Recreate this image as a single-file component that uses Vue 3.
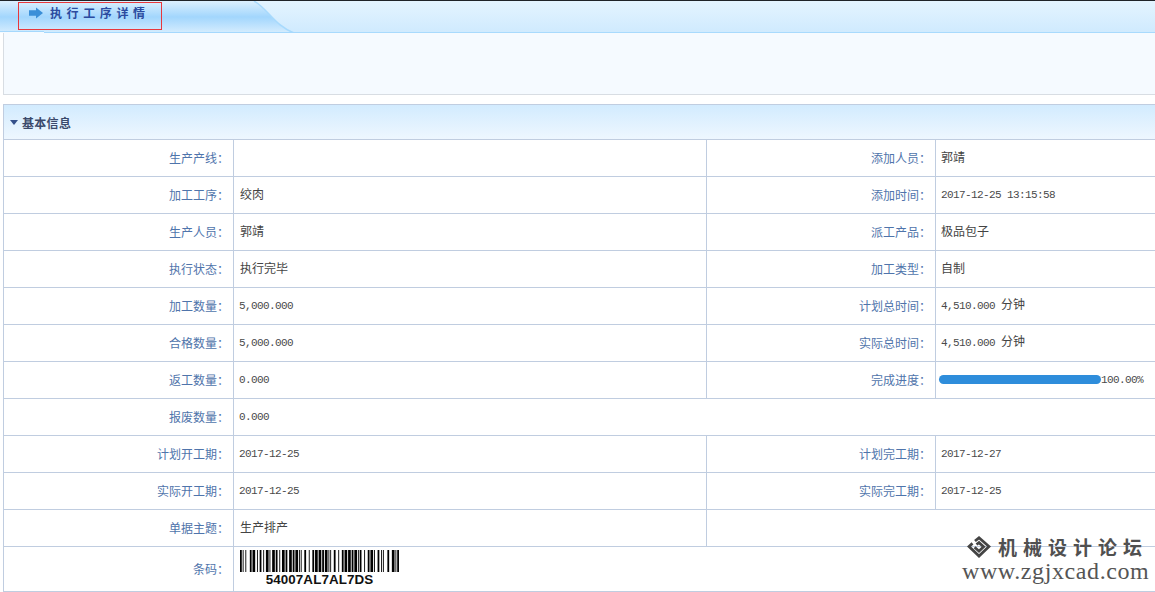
<script setup>
const rows = [
  [{ l: '生产产线：', v: '' }, { l: '添加人员：', v: '郭靖' }],
  [{ l: '加工工序：', v: '绞肉' }, { l: '添加时间：', n: '2017-12-25 13:15:58' }],
  [{ l: '生产人员：', v: '郭靖' }, { l: '派工产品：', v: '极品包子' }],
  [{ l: '执行状态：', v: '执行完毕' }, { l: '加工类型：', v: '自制' }],
  [{ l: '加工数量：', n: '5,000.000' }, { l: '计划总时间：', n: '4,510.000 ', v: '分钟' }],
  [{ l: '合格数量：', n: '5,000.000' }, { l: '实际总时间：', n: '4,510.000 ', v: '分钟' }],
  [{ l: '返工数量：', n: '0.000' }, { l: '完成进度：', progress: true }],
  [{ l: '报废数量：', n: '0.000', span: 3 }],
  [{ l: '计划开工期：', n: '2017-12-25' }, { l: '计划完工期：', n: '2017-12-27' }],
  [{ l: '实际开工期：', n: '2017-12-25' }, { l: '实际完工期：', n: '2017-12-25' }],
  [{ l: '单据主题：', v: '生产排产' }, { blank: true }]
]
const patterns = {
  start: '211214', 5: '213212', 4: '221231', 0: '123122', 7: '312131',
  A: '111323', L: '132131', D: '112313', S: '213113', check: '221114', stop: '2331112'
}
const seq = ['start', ...'54007AL7AL7DS', 'check', 'stop']
const bars = []
let x = 0
for (const key of seq) {
  const p = patterns[key]
  for (let i = 0; i < p.length; i++) {
    const w = Number(p[i])
    if (i % 2 === 0) bars.push({ x, w })
    x += w
  }
}
</script>

<template>
  <div class="page">
    <header class="topbar">
      <svg class="tab-shape" width="300" height="32" viewBox="0 0 300 32" aria-hidden="true">
        <defs>
          <linearGradient id="tabg" x1="0" y1="0" x2="0" y2="1">
            <stop offset="0" stop-color="#dcf0fe" />
            <stop offset="0.5" stop-color="#a2d6fd" />
            <stop offset="1" stop-color="#d6edfe" />
          </linearGradient>
        </defs>
        <path d="M0 0H254C268 8 274 24 294 32H0Z" fill="url(#tabg)" stroke="none" />
        <path d="M254 0C268 8 274 24 294 32" fill="none" stroke="#a8dafd" stroke-width="1.5" />
        <rect x="44" y="31" width="256" height="1" fill="#a5d8fd" />
        <rect x="0" y="30" width="44" height="1" fill="#a5d8fd" />
        <rect x="0" y="31" width="44" height="1" fill="#f5faff" />
      </svg>
      <div class="title-box">
        <svg class="arrow" width="14" height="12" viewBox="0 0 14 12" aria-hidden="true">
          <path d="M0 3.2H7V0.5L14 6L7 11.5V8.8H0Z" fill="#3a8fd8" />
        </svg>
        <span class="title">执行工序详情</span>
      </div>
    </header>

    <div class="toolbar"></div>

    <section class="info">
      <div class="section-head">
        <span class="tri"></span>
        <span class="section-title">基本信息</span>
      </div>
      <table class="grid">
        <colgroup>
          <col class="c1" /><col class="c2" /><col class="c3" /><col class="c4" />
        </colgroup>
        <tbody>
          <tr v-for="(row, i) in rows" :key="i">
            <template v-for="(c, j) in row" :key="j">
              <td v-if="c.blank" colspan="2"></td>
              <template v-else>
                <td class="label">{{ c.l }}</td>
                <td class="value" :class="{ 'value-first': j === 0, 'value-bar': c.progress }" :colspan="c.span || 1">
                  <div v-if="c.progress" class="progress">
                    <span class="bar"></span><span class="num">100.00%</span>
                  </div>
                  <template v-else>
                    <span v-if="c.n" class="num">{{ c.n }}</span>{{ c.v }}
                  </template>
                </td>
              </template>
            </template>
          </tr>
          <tr class="last">
            <td class="label">条码：</td>
            <td class="value barcode-cell" colspan="3">
              <div class="barcode">
                <svg width="159" height="22" viewBox="0 0 178 22" preserveAspectRatio="none" aria-hidden="true">
                  <rect v-for="(b, k) in bars" :key="k" :x="b.x" y="0" :width="b.w" height="22" fill="#000" />
                </svg>
                <span class="code-text">54007AL7AL7DS</span>
              </div>
            </td>
          </tr>
        </tbody>
      </table>
    </section>

    <div class="watermark">
      <div class="wm-top">
        <svg width="24" height="22" viewBox="0 0 24 22" aria-hidden="true">
          <g fill="none" stroke="#444" stroke-width="2.8">
            <path d="M8 5L12 1.8L22 10.5L12 20L2 10.5L5.5 7.4" />
            <path d="M9.5 8.5L12 6.6L16.6 10.8L12 15.2L7.6 11.2" />
          </g>
        </svg>
        <span class="wm-cn">机械设计论坛</span>
      </div>
      <div class="wm-url">www.zgjxcad.com</div>
    </div>
  </div>
</template>

<style>
html, body { margin: 0; padding: 0; background: #fff; }
</style>

<style scoped>
.page {
  position: relative;
  width: 1155px;
  height: 592px;
  overflow: hidden;
  background: #fff;
  font-family: "Noto Sans CJK SC", "Liberation Sans", sans-serif;
  font-size: 12px;
}
.topbar {
  position: relative;
  height: 32px;
  border-top: 1px solid #1f2328;
  background: linear-gradient(#e4f4ff, #cfeafe);
  box-shadow: inset 0 -1px 0 #a8dafd;
}
.tab-shape {
  position: absolute;
  left: 0;
  top: 0;
}
.title-box {
  position: absolute;
  left: 18px;
  top: 1px;
  width: 132px;
  height: 19px;
  padding: 0 0 7px 10px;
  border: 1px solid #e8383c;
  display: flex;
  align-items: center;
  gap: 7px;
}
.arrow { flex: none; }
.title {
  font-weight: 700;
  letter-spacing: 4.6px;
  color: #2b4ba0;
  line-height: 18px;
  white-space: nowrap;
}
.toolbar {
  height: 61px;
  margin-left: 3px;
  margin-right: -1px;
  background: #f5faff;
  border: 1px solid #d8dde3;
  border-top: 0;
}
.info {
  margin: 9px -1px 0 3px;
}
.section-head {
  height: 34px;
  display: flex;
  align-items: center;
  gap: 4px;
  padding-left: 6px;
  border: 1px solid #c0cde0;
  background: linear-gradient(#d2ebfe, #eef7ff);
}
.tri {
  width: 0;
  height: 0;
  border-left: 4px solid transparent;
  border-right: 4px solid transparent;
  border-top: 5px solid #34508a;
}
.section-title {
  font-weight: 700;
  letter-spacing: 0.3px;
  color: #3b4a6b;
  line-height: 16px;
  padding-top: 2px;
}
.grid {
  width: 1153px;
  table-layout: fixed;
  border-collapse: separate;
  border-spacing: 0;
  border-left: 1px solid #c0cde0;
}
.c1 { width: 230px; }
.c2 { width: 473px; }
.c3 { width: 229px; }
.c4 { width: 221px; }
td {
  height: 37px;
  box-sizing: border-box;
  padding: 0;
  border-bottom: 1px solid #c0cde0;
  border-right: 1px solid #c0cde0;
  line-height: 16px;
}
.label {
  text-align: right;
  padding-right: 4px;
  color: #4f74ab;
}
.value {
  padding: 0 0 2px 5px;
  color: #444;
  white-space: pre;
}
.value-first { padding-left: 6px; }
.value-bar { padding-bottom: 1px; }
.num {
  font-family: "Liberation Mono", "DejaVu Sans Mono", monospace;
  font-size: 11px;
  letter-spacing: -0.6px;
  color: #4a4a4a;
}
.value-first .num { margin-left: -1px; }
.progress {
  display: flex;
  align-items: center;
  margin-left: -2px;
}
.bar {
  width: 162px;
  height: 9px;
  border-radius: 5px;
  background: #2e8ddb;
}
.last td { height: 45px; }
.value.barcode-cell {
  vertical-align: top;
  padding: 0 0 0 6px;
}
.barcode {
  display: flex;
  flex-direction: column;
  align-items: flex-start;
  width: 159px;
  padding-top: 3px;
}
.barcode svg { display: block; }
.code-text {
  align-self: center;
  font-family: "Liberation Sans", Arial, sans-serif;
  font-weight: 700;
  font-size: 13.4px;
  line-height: 15px;
  letter-spacing: 0.1px;
  color: #111;
}
.watermark {
  position: absolute;
  left: 962px;
  top: 535px;
  width: 193px;
  color: #4c4c4c;
}
.wm-top {
  display: flex;
  align-items: center;
  padding-left: 5px;
  gap: 7px;
  height: 24px;
}
.wm-cn {
  font-family: "Noto Sans CJK SC", sans-serif;
  font-size: 19px;
  font-weight: 700;
  letter-spacing: 6px;
  line-height: 24px;
  white-space: nowrap;
  color: #505050;
}
.wm-url {
  font-family: "Liberation Serif", serif;
  font-size: 24px;
  line-height: 24px;
  letter-spacing: 0.6px;
  white-space: nowrap;
  color: #555;
}
</style>
